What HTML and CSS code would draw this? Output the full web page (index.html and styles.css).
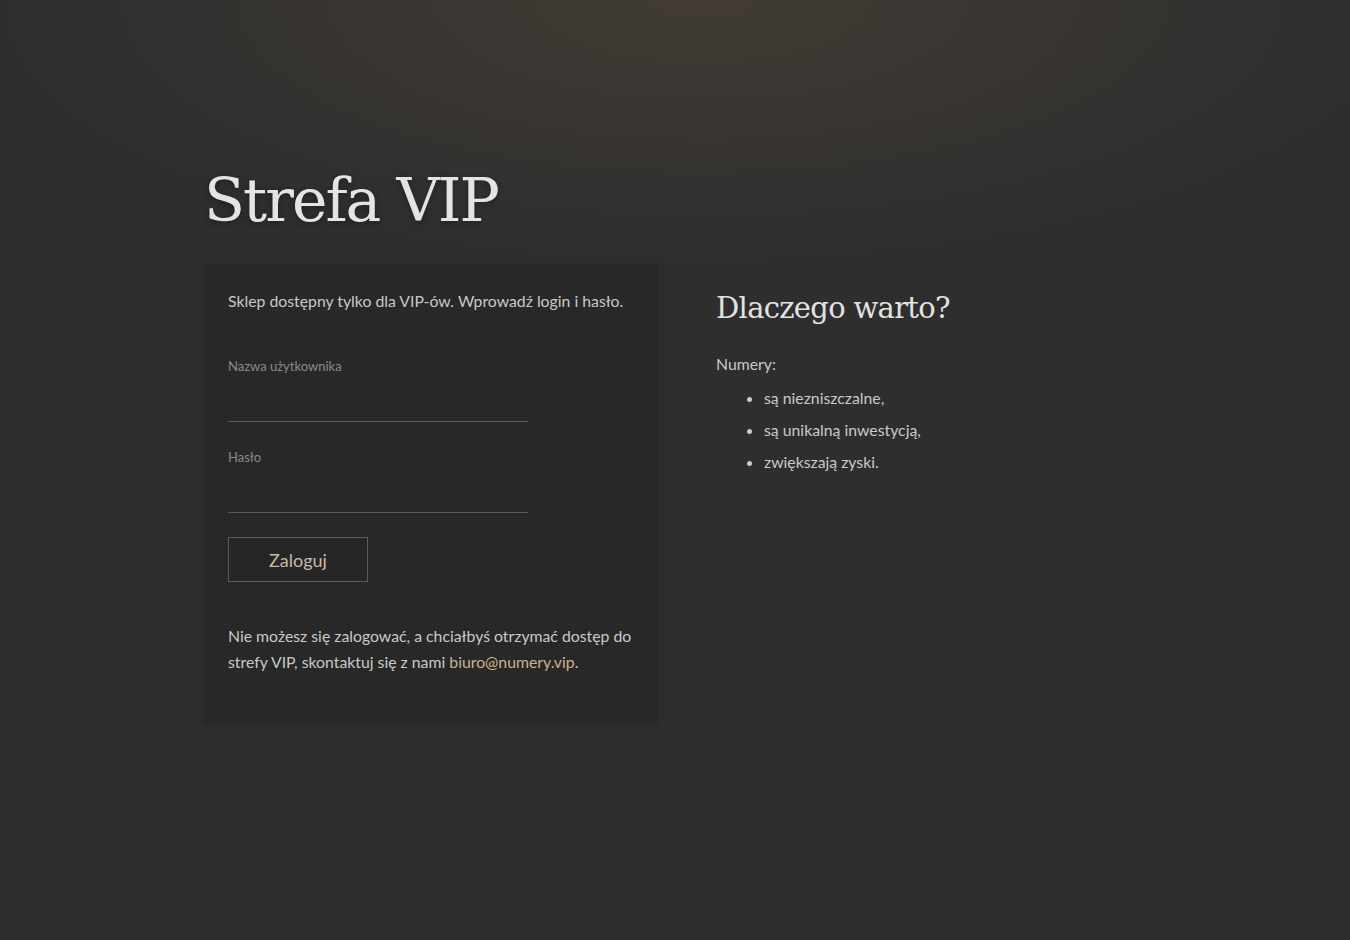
FILE: index.html
```html
<!DOCTYPE html>
<html lang="pl">
<head>
    <meta charset="UTF-8">
    <meta name="viewport" content="width=device-width, initial-scale=1.0">
    <title>Strefa VIP</title>
    <link rel="stylesheet" href="styles.css">
</head>
<body>
    <div class="container">
        <h1 class="page-title">Strefa VIP</h1>

        <div class="row">
            <div class="login-box">
                <p class="intro">Sklep dostępny tylko dla VIP-ów. Wprowadź login i hasło.</p>

                <form class="login-form" onsubmit="return false;">
                    <label class="field">
                        <span class="field-label">Nazwa użytkownika</span>
                        <input type="text" name="username">
                    </label>
                    <label class="field">
                        <span class="field-label">Hasło</span>
                        <input type="password" name="password">
                    </label>
                    <button type="submit" class="login-btn">Zaloguj</button>
                </form>

                <p class="contact">Nie możesz się zalogować, a chciałbyś otrzymać dostęp do strefy VIP, skontaktuj się z nami <a href="mailto:biuro@numery.vip">biuro@numery.vip</a>.</p>
            </div>

            <div class="why">
                <h2>Dlaczego warto?</h2>
                <p>Numery:</p>
                <ul>
                    <li>są niezniszczalne,</li>
                    <li>są unikalną inwestycją,</li>
                    <li>zwiększają zyski.</li>
                </ul>
            </div>
        </div>
    </div>
</body>
</html>
```

FILE: styles.css
```css
html {
    height: 100%;
}

body {
    margin: 0;
    min-height: 100%;
    font-family: Lato, "Open Sans", sans-serif;
    font-size: 15.8px;
    color: #c9c9c9;
    background-color: #2e2e2e;
    background-image: radial-gradient(ellipse 700px 260px at 52% 0, rgba(72, 64, 54, 0.75), rgba(46, 46, 46, 0) 100%);
    background-repeat: no-repeat;
}

.container {
    width: 942px;
    margin: 0 auto;
    padding-top: 160px;
}

.page-title {
    font-family: "DejaVu Serif", "Liberation Serif", serif;
    font-weight: normal;
    font-size: 60px;
    line-height: 80px;
    letter-spacing: -2px;
    color: #e4e4e4;
    margin: 0 0 24px 0;
    text-shadow: 0 2px 6px rgba(0, 0, 0, 0.35);
}

.row {
    display: flex;
    align-items: flex-start;
    gap: 58px;
}

.login-box {
    width: 406px;
    padding: 24px 24px 24px 24px;
    background-color: #282828;
    box-shadow: 0 2px 6px rgba(0, 0, 0, 0.12);
}

.intro {
    margin: 0 0 43px 0;
    line-height: 26px;
}

.login-form {
    display: flex;
    flex-direction: column;
    align-items: flex-start;
}

.field {
    display: block;
    width: 300px;
    margin-bottom: 26px;
}

.field-label {
    display: block;
    font-size: 13px;
    color: #8a8a8a;
    line-height: 18px;
}

.field input {
    display: block;
    width: 100%;
    height: 46px;
    padding: 0;
    border: none;
    border-bottom: 1px solid #5a5a5a;
    background: transparent;
    color: #ddd;
    font-family: inherit;
    font-size: 16px;
    outline: none;
}

.login-btn {
    width: 140px;
    height: 45px;
    margin-top: -2px;
    background-color: #262626;
    border: 1px solid #5c5c5c;
    color: #c6bba6;
    font-family: inherit;
    font-size: 18px;
    cursor: pointer;
}

.login-btn:hover {
    border-color: #8a7d63;
}

.contact {
    margin: 41px 0 24px 0;
    line-height: 26px;
}

.contact a {
    color: #c8b38a;
    text-decoration: none;
}

.why {
    padding-top: 22px;
}

.why h2 {
    font-family: "DejaVu Serif", "Liberation Serif", serif;
    font-weight: normal;
    font-size: 29px;
    letter-spacing: -0.7px;
    color: #e2e2e2;
    margin: 0 0 21px 0;
    line-height: 44px;
}

.why p {
    margin: 0 0 5px 0;
    line-height: 26px;
}

.why ul {
    margin: 0;
    padding-left: 48px;
}

.why li {
    line-height: 32px;
}
```
